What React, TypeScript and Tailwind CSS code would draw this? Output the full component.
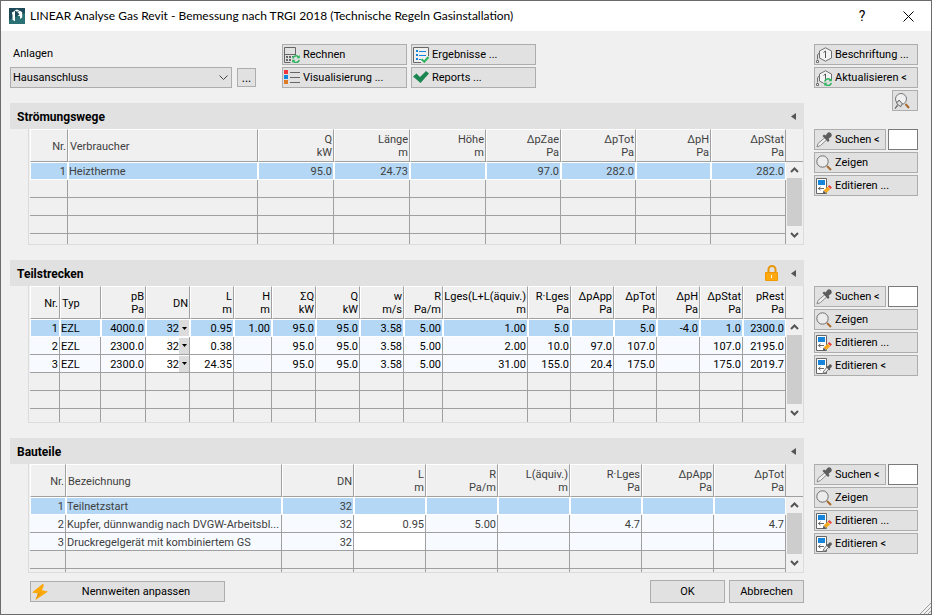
import { useState } from "react";
import type { ReactNode } from "react";
import clsx from "clsx";

type Column = { title: string; unit?: string; width: string; left?: boolean; editable?: boolean; dropdown?: boolean };

const stroemungswege: Column[] = [
  { title: "Nr.", width: "w-[38px]" },
  { title: "Verbraucher", width: "w-[190px]", left: true },
  { title: "Q", unit: "kW", width: "w-[76px]" },
  { title: "Länge", unit: "m", width: "w-[76px]" },
  { title: "Höhe", unit: "m", width: "w-[76px]" },
  { title: "ΔpZae", unit: "Pa", width: "w-[75px]" },
  { title: "ΔpTot", unit: "Pa", width: "w-[75px]" },
  { title: "ΔpH", unit: "Pa", width: "w-[75px]" },
  { title: "ΔpStat", unit: "Pa", width: "w-[75px]" },
];

const teilstrecken: Column[] = [
  { title: "Nr.", width: "w-[30px]" },
  { title: "Typ", width: "w-[41px]", left: true },
  { title: "pB", unit: "Pa", width: "w-[45px]" },
  { title: "DN", width: "w-[44px]", editable: true, dropdown: true },
  { title: "L", unit: "m", width: "w-[44px]", editable: true },
  { title: "H", unit: "m", width: "w-[38px]" },
  { title: "ΣQ", unit: "kW", width: "w-[44px]" },
  { title: "Q", unit: "kW", width: "w-[44px]" },
  { title: "w", unit: "m/s", width: "w-[44px]" },
  { title: "R", unit: "Pa/m", width: "w-[39px]" },
  { title: "Lges(L+L(äquiv.)", unit: "m", width: "w-[85px]" },
  { title: "R·Lges", unit: "Pa", width: "w-[43px]" },
  { title: "ΔpApp", unit: "Pa", width: "w-[43px]" },
  { title: "ΔpTot", unit: "Pa", width: "w-[43px]" },
  { title: "ΔpH", unit: "Pa", width: "w-[43px]" },
  { title: "ΔpStat", unit: "Pa", width: "w-[43px]" },
  { title: "pRest", unit: "Pa", width: "w-[43px]" },
];

const bauteile: Column[] = [
  { title: "Nr.", width: "w-[36px]" },
  { title: "Bezeichnung", width: "w-[216px]", left: true },
  { title: "DN", width: "w-[72px]" },
  { title: "L", unit: "m", width: "w-[72px]", editable: true },
  { title: "R", unit: "Pa/m", width: "w-[72px]" },
  { title: "L(äquiv.)", unit: "m", width: "w-[72px]" },
  { title: "R·Lges", unit: "Pa", width: "w-[72px]" },
  { title: "ΔpApp", unit: "Pa", width: "w-[72px]" },
  { title: "ΔpTot", unit: "Pa", width: "w-[72px]" },
];

const wegeRows = [["1", "Heiztherme", "95.0", "24.73", "", "97.0", "282.0", "", "282.0"]];

const streckenRows = [
  ["1", "EZL", "4000.0", "32", "0.95", "1.00", "95.0", "95.0", "3.58", "5.00", "1.00", "5.0", "", "5.0", "-4.0", "1.0", "2300.0"],
  ["2", "EZL", "2300.0", "32", "0.38", "", "95.0", "95.0", "3.58", "5.00", "2.00", "10.0", "97.0", "107.0", "", "107.0", "2195.0"],
  ["3", "EZL", "2300.0", "32", "24.35", "", "95.0", "95.0", "3.58", "5.00", "31.00", "155.0", "20.4", "175.0", "", "175.0", "2019.7"],
];

const bauteileRows = [
  ["1", "Teilnetzstart", "32", "", "", "", "", "", ""],
  ["2", "Kupfer, dünnwandig nach DVGW-Arbeitsbl...", "32", "0.95", "5.00", "", "4.7", "", "4.7"],
  ["3", "Druckregelgerät mit kombiniertem GS", "32", "", "", "", "", "", ""],
];

/* ---------- icons ---------- */

function Icon({ children }: { children: ReactNode }) {
  return (
    <svg width="16" height="16" viewBox="0 0 16 16" fill="none" className="shrink-0" aria-hidden="true">
      {children}
    </svg>
  );
}

function LogoIcon() {
  return (
    <Icon>
      <rect width="16" height="16" fill="#2b7075" />
      <path d="M0 0h16v5L0 12z" fill="#1d4a58" />
      <path d="M3 4.500l3-1.700v10.400l-2.500-1.400V6.500L3 6z" fill="#fff" />
      <path d="M5.500 2.300L8 1.500l2.500 1L8 3.800z" fill="#fff" />
      <path d="M8.500 4l2.500-1.200 2.200 1.400v5.300L11 11V8.300L8.500 7.500l2-1z" fill="#fff" />
    </Icon>
  );
}

function RefreshMark() {
  return (
    <g stroke="#2db35d" strokeWidth="1.500">
      <path d="M8.700 11.500a3.400 3.400 0 0 1 6-1.300" />
      <path d="M15.300 13a3.400 3.400 0 0 1-6 1.200" />
      <path d="M15.800 8v3.300h-3.200zM8.200 16v-3.200h3.200z" fill="#2db35d" stroke="none" />
    </g>
  );
}

function CalcIcon() {
  return (
    <Icon>
      <path d="M.5 15.500V.5h11v7.500M.5 7.500h11M.5 15.500h6" stroke="#666" />
      <path d="M2 9h2v2H2zM5 9h2v2H5zM2 12h2v2H2zM5 12h2v2H5zM8 9h1v1H8z" fill="#666" />
      <RefreshMark />
    </Icon>
  );
}

function ListIcon() {
  return (
    <Icon>
      <path d="M0 0h4v4H0z" fill="#f0353a" />
      <path d="M0 5h4v4H0z" fill="#1585dc" />
      <path d="M0 10h4v4H0z" fill="#dc7a28" />
      <path d="M6 2.500h10M6 7.500h10M6 12.500h10" stroke="#666" />
    </Icon>
  );
}

function ResultIcon() {
  return (
    <Icon>
      <path d="M8 15.500H.5V.5h15V9" fill="#f0f0f0" stroke="#666" />
      <path d="M3 3h2v2H3zM3 7h2v2H3zM3 11h2v2H3z" fill="#1585dc" />
      <path d="M6 4.500h7M6 8.500h7M6 12.500h2" stroke="#1585dc" />
      <path d="M8.500 12.300l2.800 2.400 4.200-4.700" stroke="#2db35d" strokeWidth="2" />
    </Icon>
  );
}

function CheckIcon() {
  return (
    <Icon>
      <path d="M0 6.500l3.500-3L7 7l6-6 3 2.500L7.500 13z" fill="#1c8650" />
    </Icon>
  );
}

function TagIcon({ refresh }: { refresh?: boolean }) {
  return (
    <Icon>
      <path d="M3.500 4L9.500.8l6 3.200v7l-6 3.200-6-3.200z" fill="#f4f4f4" stroke="#707070" />
      <path d="M7.500 5.500l2-1.500v7" stroke="#555" />
      <path d="M3.500 5.500L1.500 8v4.500" stroke="#707070" />
      <path d="M.5 13.500h2v2h-2z" fill="#fff" stroke="#707070" />
      {refresh && (
        <>
          <circle cx="12" cy="12.300" r="4.300" fill="#e1e1e1" />
          <RefreshMark />
        </>
      )}
    </Icon>
  );
}

function PinSearchIcon() {
  return (
    <Icon>
      <circle cx="7" cy="6" r="5.500" fill="#f0f0f0" stroke="#777" />
      <path d="M11.500 11l3.500 4" stroke="#a86b2d" strokeWidth="2" />
      <path d="M5 7l3.500 4-1 .8-.8 2-2-1.800L1 15.500l2.800-4.300L2 9.500l2-.7z" fill="#e1e1e1" stroke="#666" />
    </Icon>
  );
}

function DropperIcon() {
  return (
    <Icon>
      <path d="M9 5.500l2 2-6.500 6L1 15l1-3.500z" fill="#f0f0f0" stroke="#8a8a8a" />
      <path d="M6.500 4L8 2.500l1.500 1L11.500 1c1.800-2 5.500 1 3.800 3.500l-2.700 2.300.9 1.700L12 10z" fill="#5c5c5c" />
    </Icon>
  );
}

function SearchIcon() {
  return (
    <Icon>
      <circle cx="6.500" cy="6.500" r="5.700" fill="#ececec" stroke="#6e6e6e" />
      <path d="M11 11l4 4" stroke="#a86b2d" strokeWidth="2" />
    </Icon>
  );
}

function EditIcon({ pick }: { pick?: boolean }) {
  return (
    <Icon>
      <path d="M.5.5h10v15H.5z" fill="#fff" stroke="#666" />
      <path d="M2 2h7v5H2z" fill="#1585dc" />
      <path d="M2 10.500h6M4.500 8.800L2.500 10.500l2 1.700" stroke="#666" />
      {pick ? (
        <>
          <path d="M11 9l2 2-3.500 3.500L7 15.500l.8-2.500z" fill="#eee" stroke="#777" />
          <path d="M9.800 8.800l1-.8.7.5 1.800-1.800c1.300-1.200 3.400.7 2.200 2.200L13.800 10.700l.5.8-1 .9z" fill="#5c5c5c" />
        </>
      ) : (
        <>
          <path d="M13.300 7l2.700 2.500-1.500 1.500-2.700-2.500z" fill="#ee4036" />
          <path d="M11.500 8.700l2.700 2.500-4 3.700-2.600-2.500z" fill="#f7a91c" />
          <path d="M7.500 12.500l2.500 2.400-3.200 1z" fill="#555" />
        </>
      )}
    </Icon>
  );
}

function BoltIcon() {
  return (
    <Icon>
      <path d="M10.500 0L0 8.500l6 1L3.500 16 16 7.500l-6-1.200L12 .8z" fill="#fba90a" />
      <path d="M6 9.500l3-.7L3.500 16z" fill="#e8920a" />
    </Icon>
  );
}

function Arrow({ up }: { up?: boolean }) {
  return (
    <svg width="9" height="6" viewBox="0 0 9 6" fill="none" aria-hidden="true">
      <path d={up ? "M1 5l3.500-3.500L8 5" : "M1 1l3.500 3.500L8 1"} stroke="#555" strokeWidth="2" />
    </svg>
  );
}

/* ---------- controls ---------- */

function ToolButton({ icon, children, className }: { icon: ReactNode; children?: ReactNode; className?: string }) {
  return (
    <button
      type="button"
      className={clsx(
        "flex h-[21px] items-center gap-[3px] border border-[#adadad] bg-[#e1e1e1] pl-px text-left whitespace-nowrap hover:bg-[#e5f1fb]",
        className
      )}
    >
      {icon}
      {children && <span className="pt-[2px]">{children}</span>}
    </button>
  );
}

function SideTools({ name, withPick }: { name: string; withPick?: boolean }) {
  return (
    <div className="flex flex-col gap-[2px] pt-[26px]">
      <div className="flex gap-[2px]">
        <ToolButton icon={<DropperIcon />} className="flex-1">Suchen &lt;</ToolButton>
        <input aria-label={`${name} suchen`} className="h-[21px] w-[30px] border border-[#7a7a7a] bg-white px-1 outline-none" />
      </div>
      <ToolButton icon={<SearchIcon />}>Zeigen</ToolButton>
      <ToolButton icon={<EditIcon />}>Editieren ...</ToolButton>
      {withPick && <ToolButton icon={<EditIcon pick />}>Editieren &lt;</ToolButton>}
    </div>
  );
}

function DnSelect({ value, row }: { value: string; row: string }) {
  return (
    <div className="flex h-4 items-stretch">
      <select
        aria-label={`DN Teilstrecke ${row}`}
        defaultValue={value}
        className="min-w-0 flex-1 appearance-none bg-transparent p-0 pt-px text-right leading-[15px] outline-none [text-align-last:right]"
      >
        <option>25</option>
        <option>32</option>
        <option>40</option>
      </select>
      <span className="flex w-[10px] items-center justify-center bg-[#dcdcdc]">
        <svg width="5" height="3" viewBox="0 0 5 3" aria-hidden="true">
          <path d="M0 0h5L2.500 3z" fill="#000" />
        </svg>
      </span>
    </div>
  );
}

function Grid({ columns, rows, total, height, dark }: { columns: Column[]; rows: string[][]; total: number; height: string; dark?: boolean }) {
  const [selected, setSelected] = useState(0);
  const blank = Array.from({ length: total - rows.length }, () => columns.map(() => ""));

  return (
    <div
      className={clsx(
        "ml-[18px] flex overflow-hidden border-x border-b border-[#dcdcdc] pl-px",
        height,
        dark ? "text-black" : "text-[#404040]"
      )}
    >
      <table className="h-max w-full min-w-0 flex-1 table-fixed border-separate border-spacing-0">
        <thead>
          <tr className="h-[33px]">
            {columns.map((col) => (
              <th
                key={col.title}
                scope="col"
                className={clsx(
                  "overflow-hidden border border-t-white border-r-[#a0a0a0] border-b-[#a0a0a0] border-l-white p-0 font-normal leading-[13px] whitespace-nowrap",
                  col.width,
                  !col.unit && "pt-px",
                  col.left ? "pl-px text-left" : "pr-px text-right"
                )}
              >
                {col.title}
                {col.unit && (
                  <>
                    <br />
                    {col.unit}
                  </>
                )}
              </th>
            ))}
          </tr>
        </thead>
        <tbody>
          {[...rows, ...blank].map((row, i) => (
            <tr key={i} onClick={() => i < rows.length && setSelected(i)} className="h-[18px]">
              {row.map((cell, j) => {
                const col = columns[j];
                const select = col.dropdown && cell !== "";
                return (
                  <td
                    key={j}
                    className={clsx(
                      "overflow-hidden p-0 leading-[15px] whitespace-nowrap",
                      !select && "pt-px",
                      col.left ? "text-left" : "text-right",
                      !col.left && !select && "pr-px",
                      i === selected
                        ? "border border-white bg-[#b3d7f5]"
                        : "border-r border-b border-[#a0a0a0] pl-px",
                      i !== selected && i < rows.length && (col.editable ? "bg-white" : "bg-[#f7fbff]")
                    )}
                  >
                    {select ? <DnSelect value={cell} row={row[0]} /> : cell}
                  </td>
                );
              })}
            </tr>
          ))}
        </tbody>
      </table>
      <div className="flex w-[17px] flex-col">
        <div className="h-[33px] border-b border-[#a0a0a0]" />
        <button type="button" aria-label="Nach oben" className="flex h-4 items-center justify-center">
          <Arrow up />
        </button>
        <div className="mr-px ml-px flex-1 bg-[#cdcdcd]" />
        <button type="button" aria-label="Nach unten" className="flex h-[18px] items-center justify-center">
          <Arrow />
        </button>
      </div>
    </div>
  );
}

function SectionHeader({ title, locked }: { title: string; locked?: boolean }) {
  return (
    <div className="flex h-[26px] items-center bg-[#e1e1e1] pr-2 pl-[7px]">
      <h2 className="flex-1 pt-px text-[12px] font-bold">{title}</h2>
      {locked && (
        <button type="button" aria-label="Gesperrt" className="mr-[12px]">
          <svg width="14" height="16" viewBox="0 0 14 16" fill="none" aria-hidden="true">
            <path d="M3.500 8V4.500a3.500 3.500 0 0 1 7 0V8" stroke="#e8960a" strokeWidth="2" />
            <path d="M.5 7.500h12v8H.5z" fill="#ffa90f" stroke="#f09a05" />
            <path d="M6.500 10v3" stroke="#fff" />
          </svg>
        </button>
      )}
      <button type="button" aria-label={`${title} einklappen`}>
        <svg width="5" height="7" viewBox="0 0 5 7" aria-hidden="true">
          <path d="M5 0v7L0 3.500z" fill="#555" />
        </svg>
      </button>
    </div>
  );
}

export default function App() {
  return (
    <div className="flex min-h-screen flex-col border border-[#6b6b6b] bg-[#f0f0f0] font-['Roboto',sans-serif] text-[11px] text-black">
      <header className="flex h-[30px] items-center bg-white pl-2">
        <LogoIcon />
        <h1 className="flex-1 pl-[5px] font-['Lato',sans-serif] text-[12px]">
          LINEAR Analyse Gas Revit - Bemessung nach TRGI 2018 (Technische Regeln Gasinstallation)
        </h1>
        <button type="button" aria-label="Hilfe" className="w-[46px] text-[14px]">?</button>
        <button type="button" aria-label="Schließen" className="flex w-[46px] justify-center">
          <svg width="11" height="11" viewBox="0 0 11 11" fill="none" aria-hidden="true">
            <path d="M.5.5l10 10M10.500.5l-10 10" stroke="#000" />
          </svg>
        </button>
      </header>

      <main className="grid grid-cols-[minmax(0,1fr)_104px] gap-x-[10px] pt-[13px] pr-[13px] pl-[9px]">
        <div className="flex h-[59px] items-start">
          <div className="w-[222px]">
            <label htmlFor="anlage" className="block h-[23px] pl-[3px] leading-[20px]">Anlagen</label>
            <div className="relative">
              <select
                id="anlage"
                defaultValue="Hausanschluss"
                className="block h-[21px] w-full appearance-none border border-[#adadad] bg-[#e1e1e1] pt-[2px] pl-[2px] outline-none"
              >
                <option>Hausanschluss</option>
              </select>
              <svg width="9" height="6" viewBox="0 0 9 6" fill="none" className="pointer-events-none absolute top-2 right-1" aria-hidden="true">
                <path d="M.5.5l4 4 4-4" stroke="#444" />
              </svg>
            </div>
          </div>
          <button type="button" aria-label="Anlage wählen" className="mt-6 ml-[5px] h-[19px] w-[19px] border border-[#adadad] bg-[#e1e1e1] text-[12px] leading-[16px]">
            ...
          </button>
          <div className="ml-[26px] grid grid-cols-[125px_125px] gap-x-1 gap-y-[2px]">
            <ToolButton icon={<CalcIcon />}>Rechnen</ToolButton>
            <ToolButton icon={<ResultIcon />}>Ergebnisse ...</ToolButton>
            <ToolButton icon={<ListIcon />}>Visualisierung ...</ToolButton>
            <ToolButton icon={<CheckIcon />}>Reports ...</ToolButton>
          </div>
        </div>
        <div className="-mb-2 flex flex-col gap-[2px]">
          <ToolButton icon={<TagIcon />}>Beschriftung ...</ToolButton>
          <ToolButton icon={<TagIcon refresh />}>Aktualisieren &lt;</ToolButton>
          <ToolButton icon={<PinSearchIcon />} className="w-[26px] self-end" />
        </div>

        <section>
          <SectionHeader title="Strömungswege" />
          <Grid columns={stroemungswege} rows={wegeRows} total={5} height="h-[116px]" />
        </section>
        <SideTools name="Strömungswege" />

        <section className="mt-[15px]">
          <SectionHeader title="Teilstrecken" locked />
          <Grid columns={teilstrecken} rows={streckenRows} total={6} height="h-[137px]" dark />
        </section>
        <div className="mt-[15px]">
          <SideTools name="Teilstrecken" withPick />
        </div>

        <section className="mt-[15px]">
          <SectionHeader title="Bauteile" />
          <Grid columns={bauteile} rows={bauteileRows} total={5} height="h-[109px]" />
        </section>
        <div className="mt-[15px]">
          <SideTools name="Bauteile" withPick />
        </div>
      </main>

      <footer className="mt-[7px] flex items-center pr-[127px] pl-[29px]">
        <button type="button" className="flex h-[21px] w-[195px] items-center border border-[#adadad] bg-[#e1e1e1] pl-px">
          <BoltIcon />
          <span className="flex-1 pt-[2px]">Nennweiten anpassen</span>
        </button>
        <div className="ml-auto flex gap-1">
          <button type="button" className="h-[23px] w-[75px] border border-[#adadad] bg-[#e1e1e1] pt-[2px]">OK</button>
          <button type="button" className="h-[23px] w-[75px] border border-[#adadad] bg-[#e1e1e1] pt-[2px]">Abbrechen</button>
        </div>
      </footer>
      <svg width="12" height="11" viewBox="0 0 12 11" fill="none" className="mt-auto self-end" aria-hidden="true">
        <path d="M1 11L12 0M5 11l7-7M9 11l3-3" stroke="#a0a0a0" />
      </svg>
    </div>
  );
}
